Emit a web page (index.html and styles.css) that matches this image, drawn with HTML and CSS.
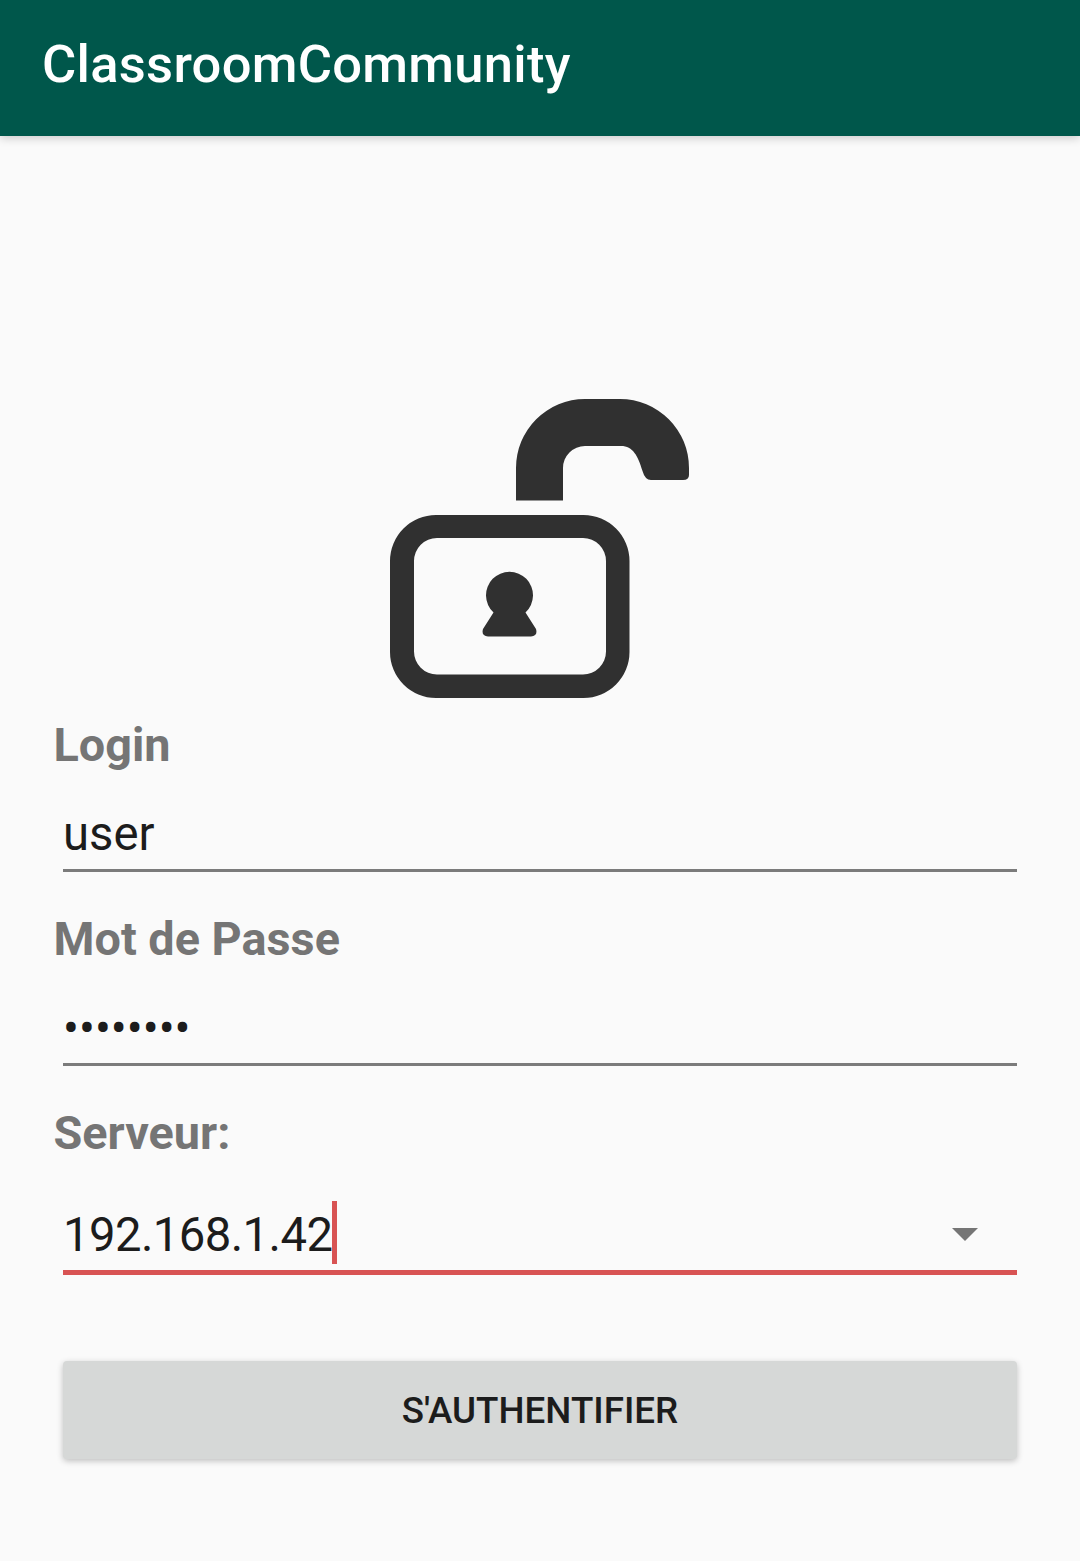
FILE: index.html
```html
<!DOCTYPE html>
<html lang="fr">
<head>
<meta charset="utf-8">
<title>ClassroomCommunity</title>
<link rel="stylesheet" href="styles.css">
</head>
<body>
<header class="app-bar"><h1 class="app-title">ClassroomCommunity</h1></header>
<main class="form">
  <svg class="lock" viewBox="0 0 300 300" aria-hidden="true">
    <path fill-rule="evenodd" d="M46 116H193.500A46 46 0 0 1 239.500 162V253A46 46 0 0 1 193.500 299H46A46 46 0 0 1 0 253V162A46 46 0 0 1 46 116ZM47 139A23 23 0 0 0 24 162V252.500A23 23 0 0 0 47 275.500H193A23 23 0 0 0 216 252.500V162A23 23 0 0 0 193 139Z"/>
    <path d="M126 101.500V69A69 69 0 0 1 195 0H230A69 69 0 0 1 299 69V76Q299 81 293 81H261Q255 81 252.500 72C248 57 243 47 231 47H195A22 22 0 0 0 173 69V101.500Z"/>
    <path d="M103.500 213.500A23.500 23.500 0 1 1 135.500 213.500L146 230Q148 237 141 237.500H98Q91 237 93 230Z"/>
  </svg>
  <div class="label">Login</div>
  <div class="field">user</div>
  <div class="label">Mot de Passe</div>
  <div class="field password">••••••••</div>
  <div class="label">Serveur:</div>
  <div class="field active">
    <span class="server">192.168.1.42</span><span class="caret"></span>
    <svg class="arrow" viewBox="0 0 26 13" aria-hidden="true"><path d="M0 0H26L13 13Z"/></svg>
  </div>
  <button class="submit" type="button">S'AUTHENTIFIER</button>
</main>
</body>
</html>
```
FILE: styles.css
```css
* {
  box-sizing: border-box;
}

body {
  margin: 0;
  min-height: 1561px;
  background: #fafafa;
  font-family: Roboto, sans-serif;
  color: #1c1c1c;
}

.app-bar {
  height: 136px;
  padding: 33px 42px 0;
  background: #00574b;
  box-shadow: 0 2px 9px rgba(0, 0, 0, 0.2);
}

.app-title {
  margin: 0;
  font-size: 52.5px;
  font-weight: 500;
  line-height: 62px;
  letter-spacing: 0.28px;
  color: #fff;
}

.form {
  display: flex;
  flex-direction: column;
  padding: 263px 63px 0;
}

.lock {
  width: 300px;
  height: 300px;
  margin: 0 auto 18px;
  fill: #303030;
}

.label {
  height: 56px;
  margin-left: -9.5px;
  font-size: 46.8px;
  font-weight: 700;
  line-height: 56px;
  color: #757575;
}

.field {
  display: flex;
  height: 99px;
  margin-bottom: 39px;
  padding-top: 33px;
  border-bottom: 3px solid #7b7b7b;
  font-size: 47.25px;
  line-height: 56px;
}

.field.password {
  padding-top: 34px;
}

.field.active {
  height: 114px;
  margin-bottom: 86px;
  padding-top: 40px;
  border-bottom: 5px solid #d85353;
}

.server {
  padding-top: 6px;
  letter-spacing: -0.58px;
}

.caret {
  width: 5px;
  height: 63px;
  background: #d85353;
}

.arrow {
  width: 26px;
  height: 13px;
  margin: 27px 39.5px 0 auto;
  fill: #757575;
}

.submit {
  height: 98px;
  padding: 1px 0 0;
  border: 0;
  border-radius: 4px;
  background: #d6d8d7;
  box-shadow: 0 2px 6px rgba(0, 0, 0, 0.24);
  color: #1c1c1c;
  font: 500 36.75px/97px Roboto, sans-serif;
}
```
